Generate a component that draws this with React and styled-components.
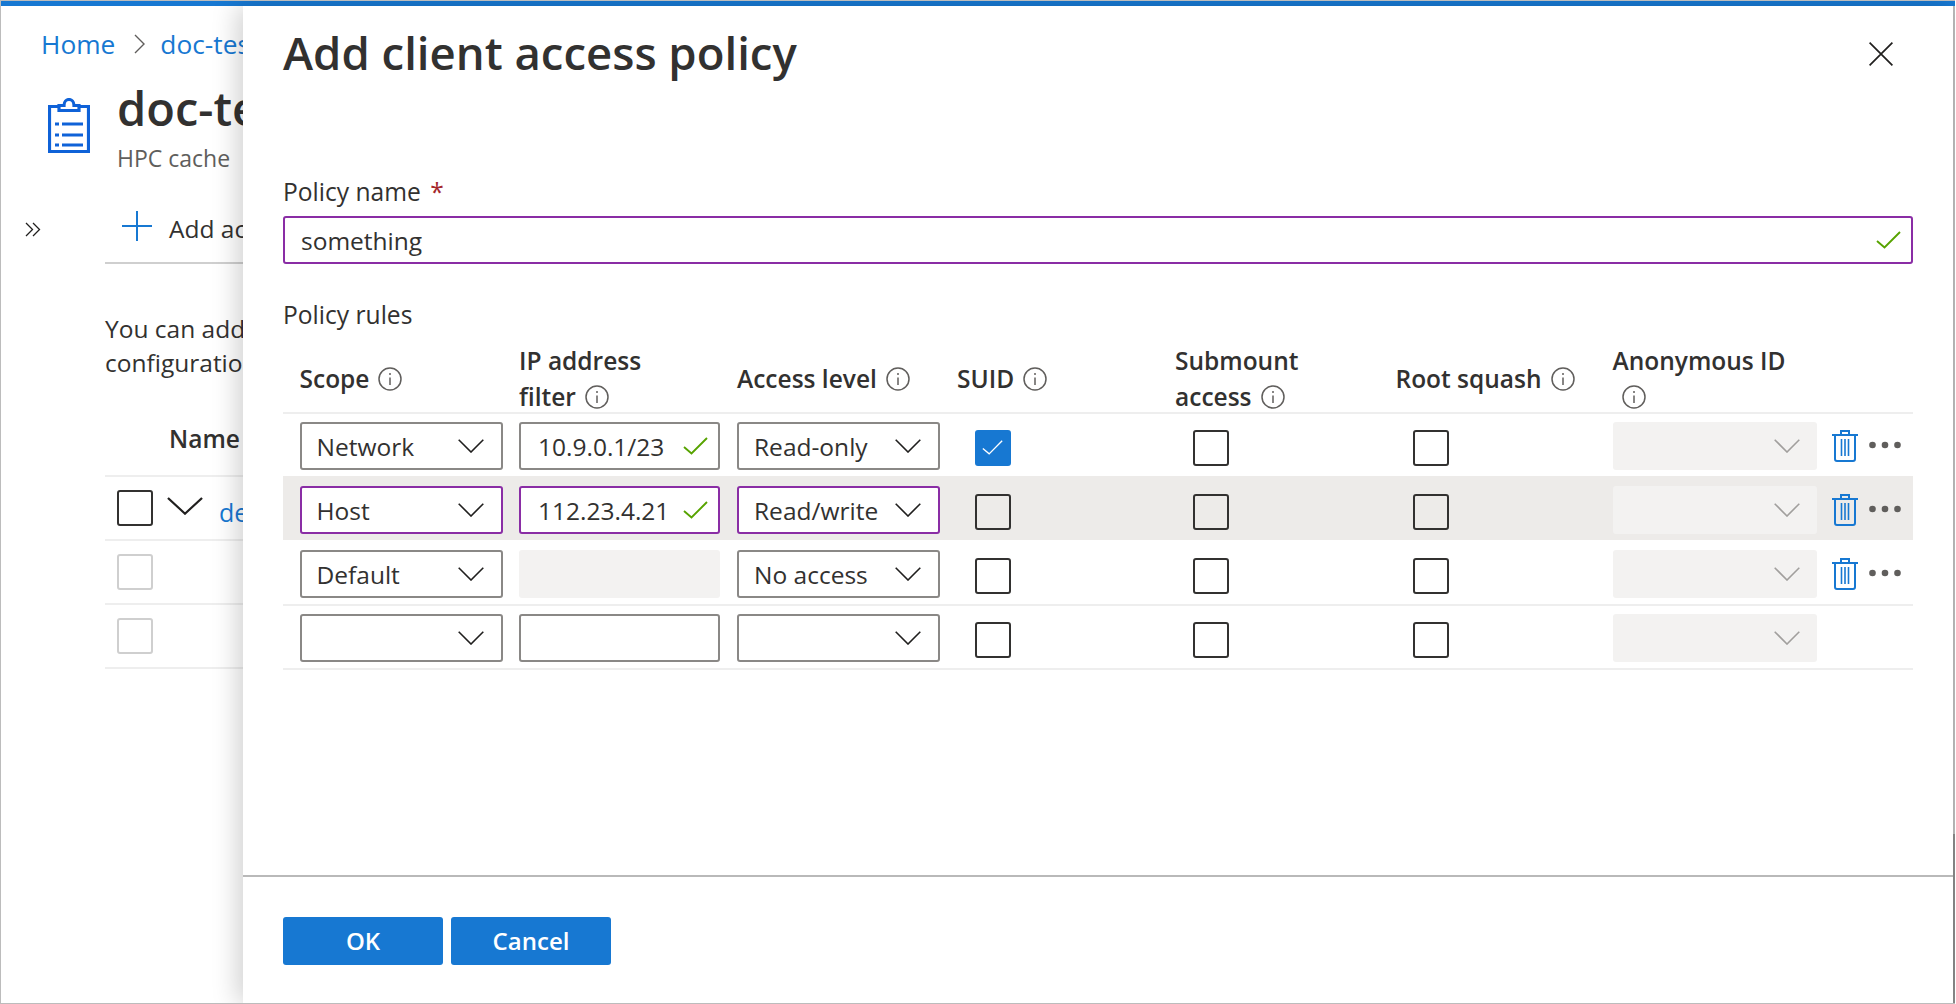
import React from 'react';
import styled, { createGlobalStyle } from 'styled-components';

const GlobalStyle = createGlobalStyle`
  html, body { margin: 0; padding: 0; background: #fff; }
  body { font-family: "Open Sans", "Noto Sans", "Liberation Sans", sans-serif; color: #323130; }
  * { box-sizing: border-box; }
`;

const Frame = styled.div`
  width: 1955px;
  height: 1004px;
  display: flex;
  flex-direction: column;
  border-top: 1px solid #bcbcbc;
  border-left: 1px solid #bcbcbc;
  border-bottom: 1px solid #bcbcbc;
  overflow: hidden;
`;

const TopBar = styled.div`
  height: 5px;
  flex: none;
  background: #1778d2;
`;

const Shell = styled.div`
  flex: 1;
  display: flex;
  min-height: 0;
`;

const EdgeLine = styled.div`
  width: 2px;
  flex: none;
  background: linear-gradient(#bcbcbc 83%, #8a8a8a 83%);
`;

/* page behind the blade, cut off by the panel */
const BackPane = styled.div`
  width: 242px;
  flex: none;
  overflow: hidden;
  white-space: nowrap;
`;

const Breadcrumb = styled.div`
  display: flex;
  align-items: center;
  height: 34px;
  margin-top: 21px;
  padding-left: 40px;
  font-size: 26.3px;
  color: #1778d2;

  svg { margin: 0 15px 0 19px; flex: none; }
`;

const ResourceHead = styled.div`
  display: flex;
  margin-top: 16px;
  padding-left: 47px;

  svg { margin-top: 21px; margin-right: 27px; flex: none; }
`;

const ResourceTitle = styled.div`
  font-size: 47px;
  font-weight: 600;
  line-height: 62px;
`;

const ResourceSub = styled.div`
  margin-top: 4px;
  font-size: 23px;
  line-height: 30px;
  color: #605e5c;
`;

const BackBody = styled.div`
  display: flex;
  margin-top: 28px;
`;

const Rail = styled.div`
  width: 104px;
  flex: none;
  padding: 19px 0 0 24px;
`;

const BackMain = styled.div`
  flex: 1;
  min-width: 0;
`;

const BackToolbar = styled.div`
  display: flex;
  align-items: center;
  gap: 17px;
  height: 63px;
  padding: 0 0 6px 17px;
  border-bottom: 2px solid #cfcfcf;
  font-size: 24.5px;

  svg { flex: none; margin-bottom: 5px; }
`;

const BackText = styled.div`
  margin-top: 48px;
  font-size: 24.5px;
  line-height: 34px;
`;

const BackHeadRow = styled.div`
  height: 64px;
  margin-top: 33px;
  padding-left: 64px;
  font-size: 24.5px;
  font-weight: 600;
  line-height: 52px;
  border-bottom: 2px solid #eeeeee;
`;

const BackRow = styled.div`
  display: flex;
  align-items: flex-start;
  height: 64px;
  padding: 13px 0 0 12px;
  border-bottom: 2px solid #eeeeee;

  svg { margin: 7px 16px 0 14px; flex: none; }
`;

const BackLink = styled.span`
  font-size: 25px;
  line-height: 44px;
  color: #1778d2;
`;

const Panel = styled.div`
  flex: 1;
  min-width: 0;
  display: flex;
  flex-direction: column;
  position: relative;
  background: #fff;
  box-shadow: -6px 0 24px rgba(0, 0, 0, 0.18);
`;

const PanelHead = styled.div`
  height: 169px;
  flex: none;
  display: flex;
  justify-content: space-between;
  padding: 0 60px 0 40px;

  svg { margin-top: 36px; }
`;

const PanelTitle = styled.h1`
  margin: 16px 0 0;
  font-size: 45.5px;
  font-weight: 600;
  line-height: 60px;
`;

const PanelBody = styled.div`
  flex: 1;
  padding: 0 40px;
`;

const FieldLabel = styled.div`
  font-size: 24.6px;
  line-height: 34px;
  height: 41px;

  span { color: #a4262c; margin-left: 3px; }
`;

const Field = styled.div`
  display: flex;
  align-items: center;
  justify-content: space-between;
  width: ${(p) => p.$width || 201}px;
  height: ${(p) => p.$height || 48}px;
  padding: 0 ${(p) => p.$padRight || 17}px 0 ${(p) => p.$padLeft || 15}px;
  border: 2px solid ${(p) => (p.$active ? '#8a2da5' : '#8a8886')};
  border-radius: 3px;
  font-size: 24.5px;
  white-space: nowrap;
  background: #fff;
`;

const DisabledField = styled.div`
  display: flex;
  align-items: center;
  justify-content: flex-end;
  width: ${(p) => p.$width}px;
  height: 48px;
  padding-right: 17px;
  border-radius: 3px;
  background: #f3f2f1;
`;

const RulesTitle = styled.div`
  margin-top: 34px;
  font-size: 24.6px;
  line-height: 34px;
`;

const columns = '219.5px 218px 220px 218px 220.5px 217px 1fr';

const HeadRow = styled.div`
  display: grid;
  grid-template-columns: ${columns};
  align-items: center;
  height: 82px;
  padding: 11px 0 0 16.5px;
  border-bottom: 2px solid #eeeeee;
`;

const HeadCell = styled.div`
  font-size: 24.5px;
  font-weight: 600;
  line-height: 36px;
  white-space: nowrap;

  svg { vertical-align: -3px; margin-left: 9px; }
`;

const RuleRow = styled.div`
  display: grid;
  grid-template-columns: ${columns};
  height: 64px;
  padding: 8px 0 6px 16.5px;
  border-bottom: 2px solid #eeeeee;

  ${(p) => p.$selected && `
    margin-top: -2px;
    height: 66px;
    padding-top: 10px;
    background: #edebe9;
    background-clip: padding-box;
    border-bottom-color: transparent;
  `}
`;

const CheckCell = styled.div`
  padding: 8px 0 0 17.5px;
`;

const CheckBox = styled.div`
  display: flex;
  align-items: center;
  justify-content: center;
  width: 36px;
  height: 36px;
  border: 2px solid ${(p) => (p.$checked ? '#1778d2' : p.$color || '#323130')};
  border-radius: 3px;
  background: ${(p) => (p.$checked ? '#1778d2' : 'transparent')};
  flex: none;
`;

const AnonCell = styled.div`
  display: flex;
  align-items: center;
`;

const RowActions = styled.div`
  display: flex;
  align-items: center;
  gap: 11px;
  margin-left: 15px;

  svg:last-child { margin-bottom: 2px; }
`;

const PanelFooter = styled.div`
  height: 128px;
  flex: none;
  display: flex;
  gap: 8px;
  padding: 40px 40px 0;
  border-top: 2px solid #b9b9b9;
`;

const Button = styled.button`
  width: 160px;
  height: 48px;
  padding: 0 0 2px;
  border: 0;
  border-radius: 3px;
  background: #1778d2;
  color: #fff;
  font-family: inherit;
  font-size: 24px;
  font-weight: 600;
`;

const Chevron = ({ color = '#201f1e', width = 26, height = 14 }) => (
  <svg width={width} height={height} viewBox="0 0 26 14" fill="none" stroke={color} strokeWidth="1.6" preserveAspectRatio="none">
    <path d="M0.7 0.7 L13 13 L25.3 0.7" />
  </svg>
);

const Check = ({ size = 25, color = '#57a300', weight = 1.9 }) => (
  <svg width={size} height={size * 0.72} viewBox="0 0 25 18" fill="none" stroke={color} strokeWidth={weight}>
    <path d="M1 10 L8.5 16.5 L24 1" />
  </svg>
);

const Info = () => (
  <svg width="24" height="24" viewBox="0 0 24 24" fill="none" stroke="#605e5c">
    <circle cx="12" cy="12" r="11" strokeWidth="1.5" />
    <path d="M12 10.5 V18" strokeWidth="1.5" />
    <circle cx="12" cy="7" r="1" fill="#605e5c" stroke="none" />
  </svg>
);

const Trash = () => (
  <svg width="26" height="32" viewBox="0 0 26 32" fill="none" stroke="#1778d2" strokeWidth="2">
    <path d="M9 4 V1 H17 V4" />
    <path d="M0 5 H26" />
    <path d="M3 5 V29 Q3 31 5 31 H21 Q23 31 23 29 V5" />
    <path d="M9.5 9 V26 M13 9 V26 M16.5 9 V26" strokeWidth="1.6" />
  </svg>
);

const Dots = () => (
  <svg width="32" height="8" viewBox="0 0 32 8" fill="#605e5c">
    <circle cx="3.5" cy="4" r="3.3" />
    <circle cx="16" cy="4" r="3.3" />
    <circle cx="28.5" cy="4" r="3.3" />
  </svg>
);

const Clipboard = () => (
  <svg width="42" height="56" viewBox="0 0 42 56" fill="none" stroke="#0f62d8" strokeWidth="3.2">
    <path d="M11 8.5 H1.5 V53.5 H40.5 V8.5 H31" />
    <path d="M11 12.5 V7.5 H16 C16 -0.5 26 -0.5 26 7.5 H31 V12.5 Z" fill="#fff" />
    <path d="M14 26 H35 M14 37 H35 M14 47 H35" />
    <path d="M7 26 H11 M7 37 H11 M7 47 H11" />
  </svg>
);

const Selector = ({ value, active, width = 203 }) => (
  <Field $active={active} $width={width}>
    <span>{value}</span>
    <Chevron />
  </Field>
);

const rows = [
  { scope: 'Network', ip: '10.9.0.1/23', access: 'Read-only', suid: true, actions: true },
  { scope: 'Host', ip: '112.23.4.21', access: 'Read/write', selected: true, actions: true },
  { scope: 'Default', ip: null, access: 'No access', actions: true },
  { scope: '', ip: '', access: '' },
];

function RuleLine({ rule }) {
  return (
    <RuleRow $selected={rule.selected}>
      <Selector value={rule.scope} active={rule.selected} />
      {rule.ip === null ? (
        <DisabledField $width={201} />
      ) : (
        <Field $active={rule.selected} $padLeft={17} $padRight={10}>
          <span>{rule.ip}</span>
          {rule.ip && <Check />}
        </Field>
      )}
      <Selector value={rule.access} active={rule.selected} />
      <CheckCell>
        <CheckBox $checked={rule.suid}>{rule.suid && <Check size={21} color="#fff" weight={1.6} />}</CheckBox>
      </CheckCell>
      <CheckCell><CheckBox /></CheckCell>
      <CheckCell><CheckBox /></CheckCell>
      <AnonCell>
        <DisabledField $width={204}><Chevron color="#a19f9d" /></DisabledField>
        {rule.actions && (
          <RowActions>
            <Trash />
            <Dots />
          </RowActions>
        )}
      </AnonCell>
    </RuleRow>
  );
}

export default function App() {
  return (
    <>
      <GlobalStyle />
      <Frame>
        <TopBar />
        <Shell>
          <BackPane>
            <Breadcrumb>
              Home
              <svg width="11" height="20" viewBox="0 0 11 20" fill="none" stroke="#605e5c" strokeWidth="1.4">
                <path d="M1 1 L10 10 L1 19" />
              </svg>
              doc-test
            </Breadcrumb>
            <ResourceHead>
              <Clipboard />
              <div>
                <ResourceTitle>doc-test</ResourceTitle>
                <ResourceSub>HPC cache</ResourceSub>
              </div>
            </ResourceHead>
            <BackBody>
              <Rail>
                <svg width="16" height="15" viewBox="0 0 16 15" fill="none" stroke="#201f1e" strokeWidth="1.3">
                  <path d="M1 1 L7.5 7.5 L1 14 M8 1 L14.5 7.5 L8 14" />
                </svg>
              </Rail>
              <BackMain>
                <BackToolbar>
                  <svg width="30" height="30" viewBox="0 0 30 30" stroke="#1778d2" strokeWidth="2">
                    <path d="M15 0 V30 M0 15 H30" />
                  </svg>
                  Add access policy
                </BackToolbar>
                <BackText>
                  You can add access policies
                  <br />
                  configuration
                </BackText>
                <BackHeadRow>Name</BackHeadRow>
                <BackRow>
                  <CheckBox />
                  <Chevron width={36} height={18} />
                  <BackLink>default</BackLink>
                </BackRow>
                <BackRow><CheckBox $color="#cfcfcf" /></BackRow>
                <BackRow><CheckBox $color="#cfcfcf" /></BackRow>
              </BackMain>
            </BackBody>
          </BackPane>
          <Panel>
            <PanelHead>
              <PanelTitle>Add client access policy</PanelTitle>
              <svg width="24" height="24" viewBox="0 0 24 24" stroke="#201f1e" strokeWidth="1.7">
                <path d="M0.6 0.6 L23.4 23.4 M23.4 0.6 L0.6 23.4" />
              </svg>
            </PanelHead>
            <PanelBody>
              <FieldLabel>Policy name <span>*</span></FieldLabel>
              <Field $active $width={1630} $padLeft={16} $padRight={10}>
                <span>something</span>
                <Check />
              </Field>
              <RulesTitle>Policy rules</RulesTitle>
              <HeadRow>
                <HeadCell>Scope<Info /></HeadCell>
                <HeadCell>IP address<br />filter<Info /></HeadCell>
                <HeadCell>Access level<Info /></HeadCell>
                <HeadCell>SUID<Info /></HeadCell>
                <HeadCell>Submount<br />access<Info /></HeadCell>
                <HeadCell>Root squash<Info /></HeadCell>
                <HeadCell>Anonymous ID<br /><Info /></HeadCell>
              </HeadRow>
              {rows.map((rule, i) => <RuleLine key={i} rule={rule} />)}
            </PanelBody>
            <PanelFooter>
              <Button>OK</Button>
              <Button>Cancel</Button>
            </PanelFooter>
          </Panel>
          <EdgeLine />
        </Shell>
      </Frame>
    </>
  );
}
